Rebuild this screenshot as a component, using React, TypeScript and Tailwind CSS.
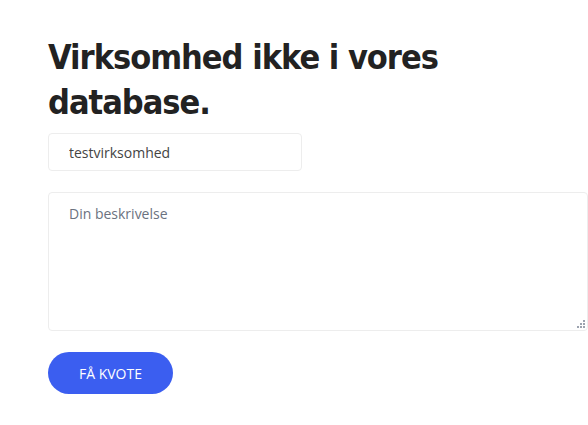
import React, { useState } from 'react';

// little dotted grip like the one in the screenshot
const Grip = () => (
  <svg width="8" height="8" viewBox="0 0 8 8" className="absolute bottom-[3px] right-[3px]">
    <g fill="#9ca3af">
      <rect x="6" y="0" width="2" height="2" />
      <rect x="3" y="3" width="2" height="2" />
      <rect x="6" y="3" width="2" height="2" />
      <rect x="0" y="6" width="2" height="2" />
      <rect x="3" y="6" width="2" height="2" />
      <rect x="6" y="6" width="2" height="2" />
    </g>
  </svg>
);

const App: React.FC = () => {
  const [company, setCompany] = useState('testvirksomhed');
  const [desc, setDesc] = useState('');

  return (
    <div className="min-h-screen bg-white pl-12 pt-[35px]" style={{ fontFamily: '"Open Sans", sans-serif' }}>
      <h1
        className="w-[410px] text-[34px] leading-[45px] font-bold text-[#222222] tracking-[-1px]"
        style={{ fontFamily: '"DejaVu Sans Condensed", "DejaVu Sans", sans-serif' }}
      >
        Virksomhed ikke i vores database.
      </h1>

      <input
        className="mt-2 block h-[38px] w-[254px] rounded-[4px] border border-[#ededed] px-5 text-[14px] text-[#444444] outline-none"
        value={company}
        onChange={(e) => setCompany(e.target.value)}
      />

      <div className="relative mt-[21px] w-[540px]">
        <textarea
          className="block h-[139px] w-full resize-none rounded-[4px] border border-[#ededed] px-5 py-[10px] text-[14px] text-[#444444] outline-none placeholder:text-[#6b7280]"
          placeholder="Din beskrivelse"
          value={desc}
          onChange={(e) => setDesc(e.target.value)}
        />
        <Grip />
      </div>

      <button className="mt-[21px] h-[42px] w-[125px] rounded-full bg-[#3b5ef0] text-[14px] text-white">
        FÅ KVOTE
      </button>
    </div>
  );
};

export default App;
